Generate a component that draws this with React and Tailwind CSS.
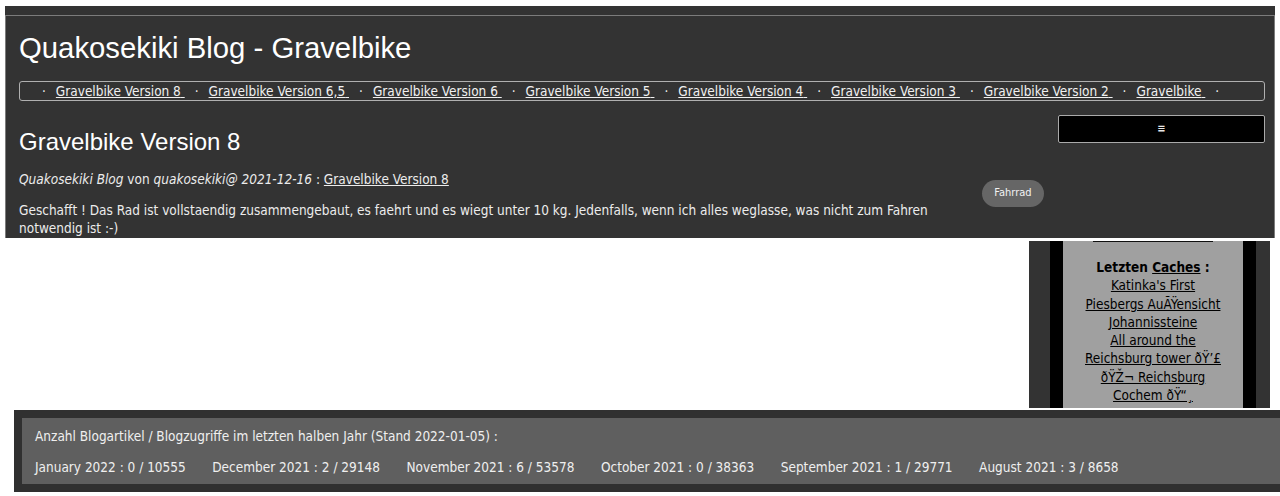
import React from "react";

const body = "font-['DejaVu_Sans_Condensed','DejaVu_Sans',sans-serif] [font-stretch:condensed]";
const head = "font-['Liberation_Sans',Arial,sans-serif]";

const navItems = [
  "Gravelbike Version 8",
  "Gravelbike Version 6,5",
  "Gravelbike Version 6",
  "Gravelbike Version 5",
  "Gravelbike Version 4",
  "Gravelbike Version 3",
  "Gravelbike Version 2",
  "Gravelbike",
];

const stats = [
  "January 2022 : 0 / 10555",
  "December 2021 : 2 / 29148",
  "November 2021 : 6 / 53578",
  "October 2021 : 0 / 38363",
  "September 2021 : 1 / 29771",
  "August 2021 : 3 / 8658",
];

export default function App() {
  return (
    <div className={`w-[1280px] h-[496px] overflow-hidden bg-white ${body} text-[13.5px]`}>
      {/* top block */}
      <div className="mx-[5px] mt-[6px] h-[232px] bg-[#333333] pt-[9px] overflow-hidden">
        <div className="h-full border border-b-0 border-[#7c7c7c] pl-[13px] pr-[9px]">
          <h1 className={`${head} text-[29.3px] leading-[33px] pt-[15px] text-white`}>
            Quakosekiki Blog - Gravelbike
          </h1>
          <nav className="mt-[17px] h-[20px] border border-[#b0b0b0] rounded-[3px] pl-[12px] flex items-center text-[#f0f0f0] leading-[18px] whitespace-nowrap">
            {navItems.map((t) => (
              <React.Fragment key={t}>
                <span className="px-[10px]">·</span>
                <a className="underline">{t}&nbsp;</a>
              </React.Fragment>
            ))}
            <span className="px-[10px]">·</span>
          </nav>
          <div className="flex mt-[14px]">
            <div className="w-[950px] shrink-0 text-[#ececec]">
              <h2 className={`${head} text-[24px] leading-[28px] mt-[13px] text-white`}>
                Gravelbike Version 8
              </h2>
              <p className="mt-[14px] leading-[18px]">
                <i>Quakosekiki Blog</i> von <i>quakosekiki@ 2021-12-16</i> :{" "}
                <a className="underline">Gravelbike Version 8</a>
              </p>
              <p className="mt-[13px] leading-[18px]">
                Geschafft ! Das Rad ist vollstaendig zusammengebaut, es faehrt und es wiegt unter 10 kg. Jedenfalls, wenn ich alles weglasse, was nicht zum Fahren notwendig ist :-)
              </p>
            </div>
            <div className="ml-[13px] mt-[65px] shrink-0">
              <span className="flex items-center justify-center w-[62px] h-[27px] rounded-full bg-[#666666] text-[11px] text-[#f2f2f2]">
                Fahrrad
              </span>
            </div>
            <div className="ml-auto w-[207px] h-[28px] shrink-0 bg-black border border-[#aaaaaa] rounded-[2px] flex items-center justify-center text-[#e8e8e8] text-[11px] font-bold">
              ≡
            </div>
          </div>
        </div>
      </div>

      {/* sidebar */}
      <div className="flex justify-end mt-[3px] pr-[10px]">
        <div className="w-[241px] h-[167px] bg-[#333333] flex pl-[21px] pr-[14px]">
          <div className="w-[13px] bg-black" />
          <div className="flex-1 bg-[#a0a0a0] flex flex-col items-center text-black leading-[18.3px] text-center">
            <div className="w-[120px] h-[1px] bg-[#111]" />
            <div className="mt-[16px]">
              <div className="font-bold">
                Letzten <a className="underline">Caches</a> :
              </div>
              <div><a className="underline">Katinka's First</a></div>
              <div><a className="underline">Piesbergs AuÃŸensicht</a></div>
              <div><a className="underline">Johannissteine</a></div>
              <div>
                <a className="underline">
                  All around the
                  <br />
                  Reichsburg tower ðŸ’£
                  <br />
                  ðŸŽ¬ Reichsburg
                  <br />
                  Cochem ðŸ“¸
                </a>
              </div>
            </div>
          </div>
          <div className="w-[13px] bg-black" />
        </div>
      </div>

      {/* bottom stats */}
      <div className="ml-[14px] mt-[2px] w-[1280px] h-[82px] bg-[#303030] pt-[8px] pl-[8px]">
        <div className="h-[66px] bg-[#5f5f5f] pl-[13px] pt-[9px] text-[#efefef] leading-[18px]">
          <div>Anzahl Blogartikel / Blogzugriffe im letzten halben Jahr (Stand 2022-01-05) :</div>
          <div className="flex gap-[26.5px] mt-[13px] whitespace-nowrap">
            {stats.map((s) => (
              <span key={s}>{s}</span>
            ))}
          </div>
        </div>
      </div>
    </div>
  );
}
